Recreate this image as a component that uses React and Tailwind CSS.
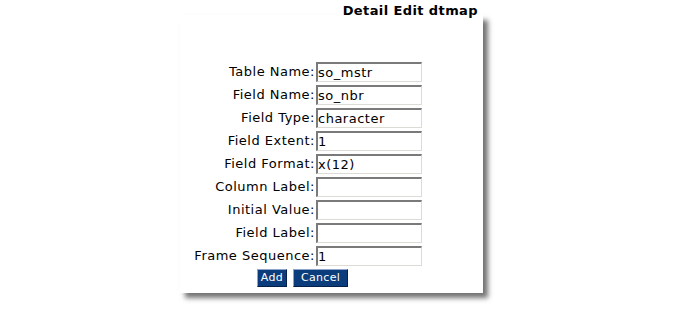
import React from "react";

const rows = [
  ["Table Name:", "so_mstr"],
  ["Field Name:", "so_nbr"],
  ["Field Type:", "character"],
  ["Field Extent:", "1"],
  ["Field Format:", "x(12)"],
  ["Column Label:", ""],
  ["Initial Value:", ""],
  ["Field Label:", ""],
  ["Frame Sequence:", "1"],
];

export default function App() {
  return (
    <div className="w-[675px] h-[309px] bg-white" style={{ fontFamily: '"DejaVu Sans", Verdana, sans-serif' }}>
      <div className="ml-[180px] w-[303px]">
        <div className="relative z-10 h-[15px] pt-[4px] pr-[5px] text-right text-[13px] leading-[14px] font-bold tracking-[0.4px] text-black">
          Detail Edit dtmap
        </div>
        <div className="h-[278px] bg-white shadow-[5px_5px_5px_rgba(0,0,0,0.55)] pt-[47px]">
          <div className="grid grid-cols-[136px_106px] gap-y-[3px]">
            {rows.map(([label, value]) => (
              <React.Fragment key={label}>
                <div className="h-[20px] pr-[1px] text-right text-[13px] leading-[20px] tracking-[0.5px] text-black whitespace-nowrap">
                  {label}
                </div>
                <div className="h-[20px] border-t-2 border-l-2 border-t-[#7a7a7a] border-l-[#7a7a7a] border-r border-b border-r-[#dcdcd4] border-b-[#dcdcd4] bg-white text-[13px] leading-[17px] tracking-[0.5px] text-black overflow-hidden whitespace-nowrap">
                  {value}
                </div>
              </React.Fragment>
            ))}
            <div className="col-span-2 flex justify-center gap-[6px] pl-[3px]">
              <button className="h-[18px] px-[3px] bg-[#0b3d7c] text-white text-[11px] leading-[14px] tracking-[0.3px] border border-t-[#8ea4c8] border-l-[#8ea4c8] border-r-[#04204a] border-b-[#04204a]">
                Add
              </button>
              <button className="h-[18px] px-[7px] bg-[#0b3d7c] text-white text-[11px] leading-[14px] tracking-[0.3px] border border-t-[#8ea4c8] border-l-[#8ea4c8] border-r-[#04204a] border-b-[#04204a]">
                Cancel
              </button>
            </div>
          </div>
        </div>
      </div>
    </div>
  );
}
